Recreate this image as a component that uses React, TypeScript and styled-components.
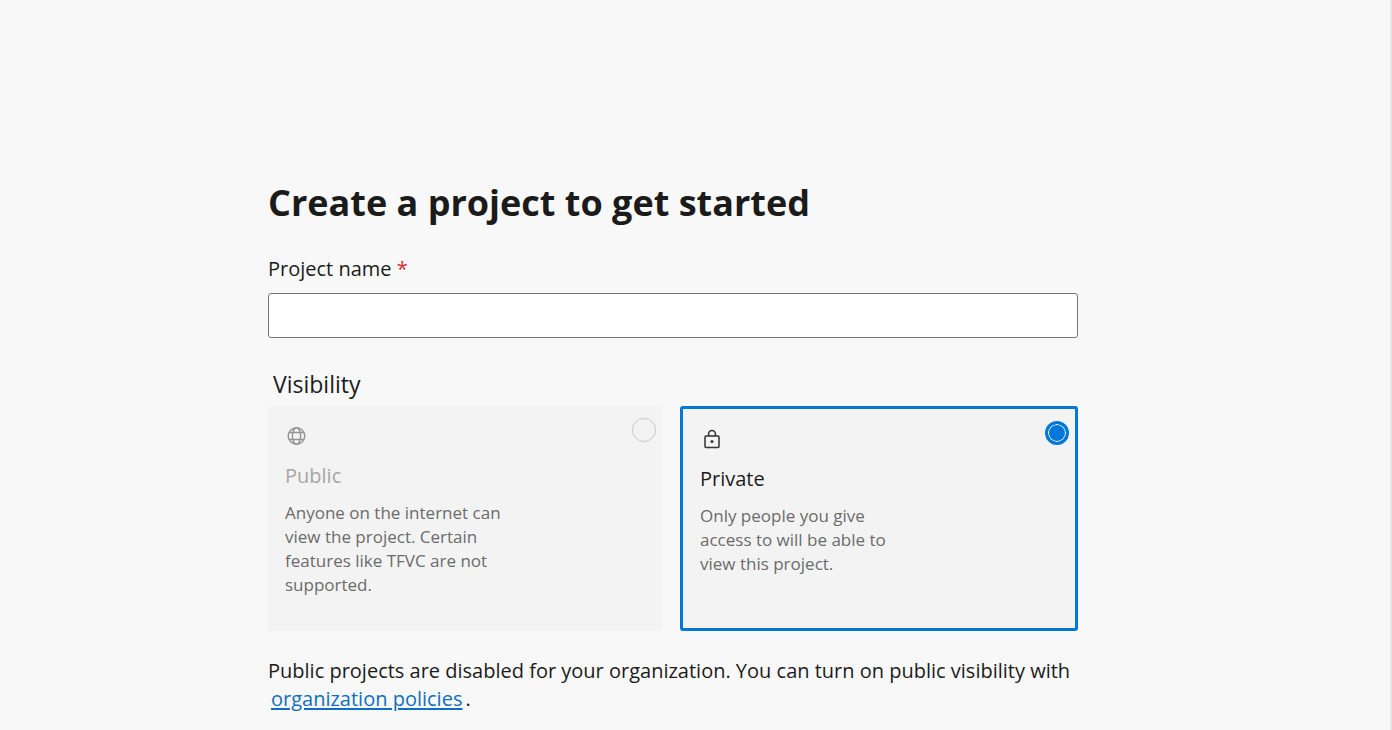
import React, { useState } from "react";
import styled, { createGlobalStyle } from "styled-components";

const GlobalStyle = createGlobalStyle`
  *, *::before, *::after { box-sizing: border-box; }
  body {
    margin: 0;
    background: #f8f8f8;
    color: #1b1b1b;
    font-family: "Segoe UI", "Open Sans", "Noto Sans", sans-serif;
    font-size: 20px;
    line-height: 28px;
  }
`;

const Page = styled.div`
  min-height: 100vh;
  padding: 175px 24px 16px;
  border-right: 2px solid #e6e6e6;
`;

const Form = styled.form`
  max-width: 854px;
  margin: 0 auto;
  padding-right: 44px;
`;

const Title = styled.h1`
  margin: 0;
  font-size: 36px;
  line-height: 56px;
  font-weight: 700;
`;

const FieldLabel = styled.label`
  display: block;
  margin: 24px 0 10px;
`;

const Required = styled.span`
  color: #e0282e;
`;

const NameInput = styled.input`
  display: block;
  width: 100%;
  height: 45px;
  padding: 0 12px;
  border: 1px solid #757575;
  border-radius: 3px;
  background: #fff;
  color: inherit;
  font: inherit;
`;

const Visibility = styled.fieldset`
  margin: 30px 0 0;
  padding: 0;
  border: 0;
  min-width: 0;
`;

const Legend = styled.legend`
  padding: 0 5px;
  font-size: 23px;
  line-height: 32px;
`;

const Cards = styled.div`
  display: grid;
  grid-template-columns: 394fr 398fr;
  gap: 18px;
  padding-top: 6px;
`;

const Card = styled.label<{ $selected: boolean; $disabled: boolean }>`
  display: flex;
  justify-content: space-between;
  align-items: flex-start;
  min-height: 225px;
  padding: 12px 6px 12px 17px;
  border: ${(p) => (p.$selected ? "3px solid #0078d7" : "0")};
  border-radius: 3px;
  background: #f3f3f3;
  color: ${(p) => (p.$disabled ? "#a6a6a6" : "#1b1b1b")};
`;

const CardBody = styled.span`
  display: flex;
  flex-direction: column;
  max-width: 219px;
  padding-top: 6px;
`;

const CardTitle = styled.span`
  margin: 14px 0 11px;
`;

const CardText = styled.span`
  color: #6b6b6b;
  font-size: 17px;
  line-height: 24px;
`;

const Icon = styled.svg<{ $color: string }>`
  display: block;
  width: 24px;
  height: 24px;
  fill: none;
  stroke: ${(p) => p.$color};
`;

const Radio = styled.input`
  appearance: none;
  flex: none;
  width: 24px;
  height: 24px;
  margin: 0;
  border: 1px solid #c8c8c8;
  border-radius: 50%;

  &:checked {
    border: 3px solid #0078d7;
    background: #0078d7;
    box-shadow: inset 0 0 0 1px #fff;
  }
`;

const Note = styled.p`
  margin: 26px 0 0;
`;

const PolicyLink = styled.a`
  margin: 0 3px;
  color: #106ebe;
  text-decoration: underline;
  text-decoration-thickness: 2px;
  text-underline-offset: 2px;
`;

const GlobeIcon = () => (
  <Icon $color="#949494" viewBox="0 0 24 24" strokeWidth="1.4" aria-hidden="true">
    <circle cx="11.5" cy="12" r="8.3" />
    <ellipse cx="11.5" cy="12" rx="4.1" ry="8.3" />
    <path d="M4 8.5h15M4 15.5h15" />
  </Icon>
);

const LockIcon = () => (
  <Icon $color="#333" viewBox="0 0 24 24" strokeWidth="1.5" aria-hidden="true">
    <rect x="5" y="9" width="14" height="11.6" rx="1" />
    <path d="M8.6 9V6.9a3.4 3.4 0 0 1 6.8 0V9" />
    <circle cx="12" cy="14.5" r="1.5" fill="#333" stroke="none" />
  </Icon>
);

const options = [
  {
    id: "public",
    title: "Public",
    text: "Anyone on the internet can view the project. Certain features like TFVC are not supported.",
    icon: <GlobeIcon />,
    disabled: true,
  },
  {
    id: "private",
    title: "Private",
    text: "Only people you give access to will be able to view this project.",
    icon: <LockIcon />,
    disabled: false,
  },
];

export default function App() {
  const [name, setName] = useState("");
  const [visibility, setVisibility] = useState("private");

  return (
    <>
      <GlobalStyle />
      <Page>
        <Form onSubmit={(e) => e.preventDefault()}>
          <Title>Create a project to get started</Title>
          <FieldLabel htmlFor="project-name">
            Project name <Required>*</Required>
          </FieldLabel>
          <NameInput
            id="project-name"
            type="text"
            required
            value={name}
            onChange={(e) => setName(e.target.value)}
          />
          <Visibility>
            <Legend>Visibility</Legend>
            <Cards>
              {options.map((o) => (
                <Card
                  key={o.id}
                  htmlFor={o.id}
                  $selected={visibility === o.id}
                  $disabled={o.disabled}
                >
                  <CardBody>
                    {o.icon}
                    <CardTitle>{o.title}</CardTitle>
                    <CardText>{o.text}</CardText>
                  </CardBody>
                  <Radio
                    id={o.id}
                    type="radio"
                    name="visibility"
                    value={o.id}
                    disabled={o.disabled}
                    checked={visibility === o.id}
                    onChange={() => setVisibility(o.id)}
                  />
                </Card>
              ))}
            </Cards>
          </Visibility>
          <Note>
            Public projects are disabled for your organization. You can turn on
            public visibility with{" "}
            <PolicyLink href="#policies">organization policies</PolicyLink>.
          </Note>
        </Form>
      </Page>
    </>
  );
}
